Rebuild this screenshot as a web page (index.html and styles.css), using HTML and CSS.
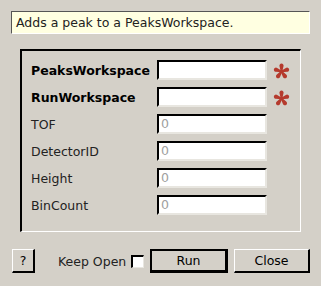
FILE: index.html
```html
<!DOCTYPE html>
<html>
<head>
<meta charset="utf-8">
<link rel="stylesheet" href="styles.css">
</head>
<body>
<div class="dialog">
  <div class="desc">Adds a peak to a PeaksWorkspace.</div>
  <div class="group">
    <div class="row"><span class="label bold">PeaksWorkspace</span><span class="field"></span><svg class="star" viewBox="-8.5 -8.5 17 17"><g fill="#b53a2d"><circle r="1.8"/><path d="M-0.8 0 L-2 -5.2 A2.1 2.1 0 1 1 2 -5.2 L0.8 0 Z"/><path d="M-0.8 0 L-2 -5.2 A2.1 2.1 0 1 1 2 -5.2 L0.8 0 Z" transform="rotate(72)"/><path d="M-0.8 0 L-2 -5.2 A2.1 2.1 0 1 1 2 -5.2 L0.8 0 Z" transform="rotate(144)"/><path d="M-0.8 0 L-2 -5.2 A2.1 2.1 0 1 1 2 -5.2 L0.8 0 Z" transform="rotate(216)"/><path d="M-0.8 0 L-2 -5.2 A2.1 2.1 0 1 1 2 -5.2 L0.8 0 Z" transform="rotate(288)"/></g></svg></div>
    <div class="row"><span class="label bold">RunWorkspace</span><span class="field"></span><svg class="star" viewBox="-8.5 -8.5 17 17"><g fill="#b53a2d"><circle r="1.8"/><path d="M-0.8 0 L-2 -5.2 A2.1 2.1 0 1 1 2 -5.2 L0.8 0 Z"/><path d="M-0.8 0 L-2 -5.2 A2.1 2.1 0 1 1 2 -5.2 L0.8 0 Z" transform="rotate(72)"/><path d="M-0.8 0 L-2 -5.2 A2.1 2.1 0 1 1 2 -5.2 L0.8 0 Z" transform="rotate(144)"/><path d="M-0.8 0 L-2 -5.2 A2.1 2.1 0 1 1 2 -5.2 L0.8 0 Z" transform="rotate(216)"/><path d="M-0.8 0 L-2 -5.2 A2.1 2.1 0 1 1 2 -5.2 L0.8 0 Z" transform="rotate(288)"/></g></svg></div>
    <div class="row"><span class="label">TOF</span><span class="field ph">0</span></div>
    <div class="row"><span class="label">DetectorID</span><span class="field ph">0</span></div>
    <div class="row"><span class="label">Height</span><span class="field ph">0</span></div>
    <div class="row"><span class="label">BinCount</span><span class="field ph">0</span></div>
  </div>
  <div class="buttons">
    <span class="btn help">?</span>
    <span class="keep">Keep Open</span>
    <span class="check"></span>
    <span class="btn run">Run</span>
    <span class="btn close">Close</span>
  </div>
</div>
</body>
</html>
```
FILE: styles.css
```css
html, body {
  margin: 0;
  padding: 0;
  background: #d4d0c8;
  font-family: "DejaVu Sans", sans-serif;
  font-size: 12.5px;
  color: #000;
}
.dialog {
  width: 321px;
  height: 286px;
  display: flex;
  flex-direction: column;
}
.desc {
  margin: 11px 11px 0 11px;
  height: 21px;
  box-sizing: content-box;
  background: #ffffe1;
  border-top: 1px solid #555;
  border-left: 1px solid #555;
  border-right: 1px solid #fff;
  border-bottom: 1px solid #fff;
  padding-left: 4px;
  line-height: 21px;
  color: #222;
}
.group {
  margin: 15px 0 0 20px;
  width: 269px;
  height: 171px;
  border-top: 2px solid #000;
  border-left: 2px solid #000;
  border-right: 1px solid #fff;
  border-bottom: 1px solid #fff;
  padding: 9px 0 0 9px;
  box-sizing: content-box;
  display: flex;
  flex-direction: column;
  gap: 7px;
}
.row {
  display: flex;
  align-items: center;
  height: 20px;
}
.label {
  width: 126px;
  color: #222;
}
.bold { font-weight: bold; color: #000; }
.field {
  width: 104px;
  height: 16px;
  background: #fff;
  border-top: 2px solid #000;
  border-left: 2px solid #000;
  border-right: 2px solid #e8e6e0;
  border-bottom: 2px solid #e8e6e0;
  padding-left: 2px;
  line-height: 16px;
  box-sizing: content-box;
}
.ph { color: #a0a0a0; }
.star {
  margin-left: 6px;
  width: 17px;
  height: 17px;
  margin-top: 2px;
}
.buttons {
  display: flex;
  align-items: center;
  margin: 17px 0 0 12px;
  height: 24px;
}
.btn {
  box-sizing: border-box;
  display: flex;
  align-items: center;
  justify-content: center;
  border-top: 1px solid #fff;
  border-left: 1px solid #fff;
  border-right: 2px solid #000;
  border-bottom: 2px solid #000;
  height: 24px;
}
.help { width: 23px; }
.keep { margin-left: 23px; width: 69px; color: #222; white-space: nowrap; }
.check {
  width: 13px;
  height: 13px;
  box-sizing: border-box;
  margin-left: 4px;
  background: #fff;
  border-top: 2px solid #000;
  border-left: 2px solid #000;
  border-right: 1px solid #e8e6e0;
  border-bottom: 1px solid #e8e6e0;
}
.run {
  margin-left: 6px;
  width: 78px;
  border: 2px solid #000;
  border-bottom-width: 3px;
  border-right-width: 3px;
}
.close { margin-left: 6px; width: 76px; }
```
